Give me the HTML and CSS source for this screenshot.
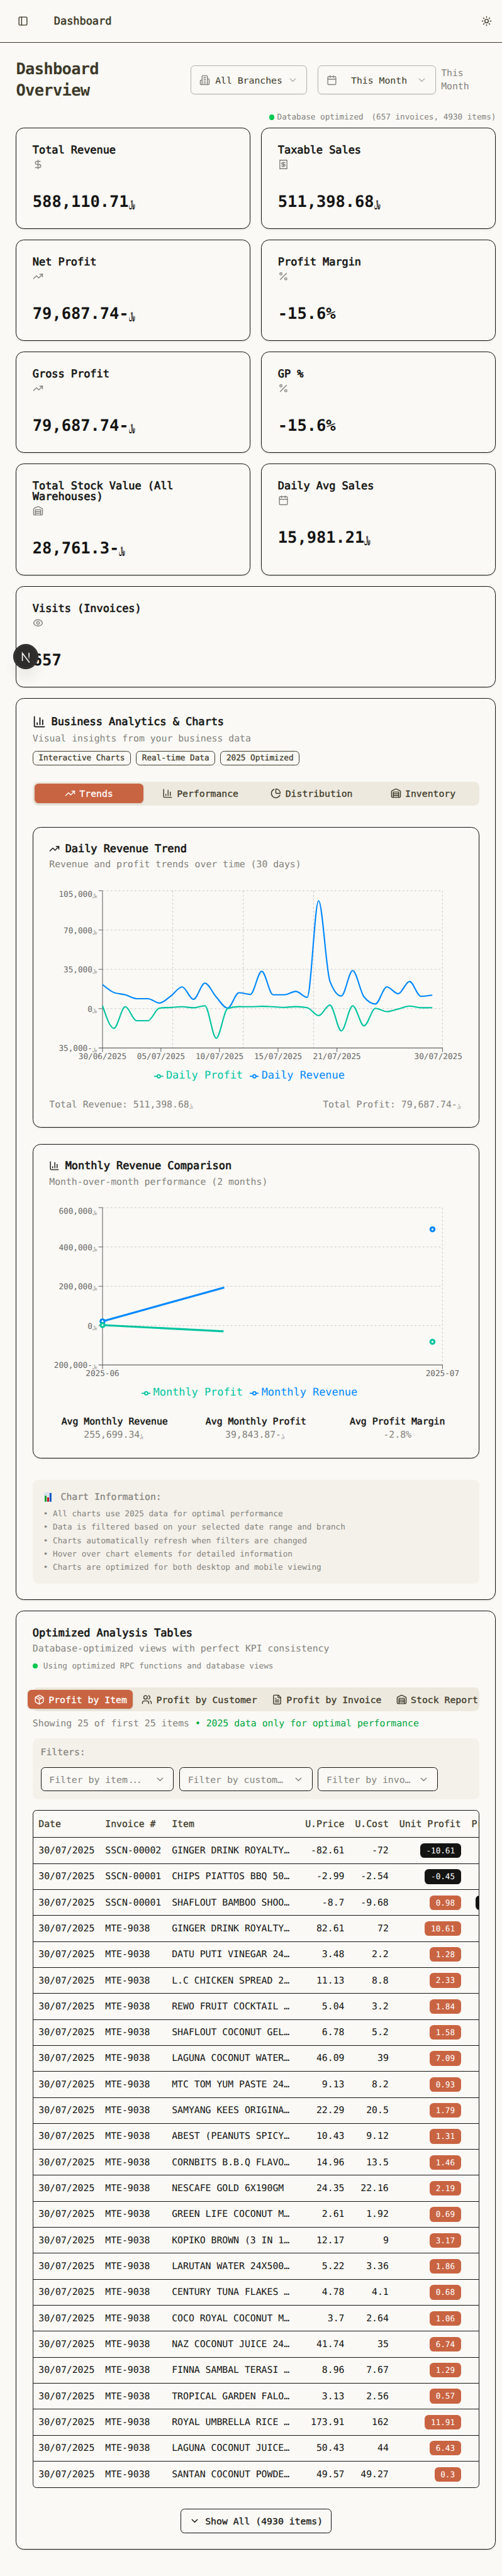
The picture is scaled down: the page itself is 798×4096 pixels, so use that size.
FILE: index.html
```html
<!DOCTYPE html>
<html lang="en">
<head>
<meta charset="utf-8">
<title>Dashboard</title>
<link rel="stylesheet" href="styles.css">
</head>
<body>
<svg class="sprite" aria-hidden="true">
  <symbol id="panel" viewBox="0 0 24 24"><rect x="3" y="3" width="18" height="18" rx="2"/><path d="M9 3v18"/></symbol>
  <symbol id="sun" viewBox="0 0 24 24"><circle cx="12" cy="12" r="4"/><path d="M12 2v2M12 20v2M4.93 4.93l1.41 1.41M17.66 17.66l1.41 1.41M2 12h2M20 12h2M6.34 17.66l-1.41 1.41M19.07 4.93l-1.41 1.41"/></symbol>
  <symbol id="building" viewBox="0 0 24 24"><path d="M6 22V4a2 2 0 0 1 2-2h8a2 2 0 0 1 2 2v18Z"/><path d="M6 12H4a2 2 0 0 0-2 2v6a2 2 0 0 0 2 2h2M18 9h2a2 2 0 0 1 2 2v9a2 2 0 0 1-2 2h-2M10 6h4M10 10h4M10 14h4M10 18h4"/></symbol>
  <symbol id="calendar" viewBox="0 0 24 24"><path d="M8 2v4M16 2v4M3 10h18"/><rect x="3" y="4" width="18" height="18" rx="2"/></symbol>
  <symbol id="chevron" viewBox="0 0 24 24"><path d="m6 9 6 6 6-6"/></symbol>
  <symbol id="dollar" viewBox="0 0 24 24"><path d="M12 2v20M17 5H9.500a3.500 3.500 0 0 0 0 7h5a3.500 3.500 0 0 1 0 7H6"/></symbol>
  <symbol id="receipt" viewBox="0 0 24 24"><path d="M4 2v20l2-1 2 1 2-1 2 1 2-1 2 1 2-1 2 1V2l-2 1-2-1-2 1-2-1-2 1-2-1-2 1Z"/><path d="M16 8h-6a2 2 0 1 0 0 4h4a2 2 0 1 1 0 4H8M12 17.500v-11"/></symbol>
  <symbol id="trend" viewBox="0 0 24 24"><path d="M16 7h6v6"/><path d="m22 7-8.500 8.500-5-5L2 17"/></symbol>
  <symbol id="percent" viewBox="0 0 24 24"><path d="M19 5 5 19"/><circle cx="6.500" cy="6.500" r="2.500"/><circle cx="17.500" cy="17.500" r="2.500"/></symbol>
  <symbol id="warehouse" viewBox="0 0 24 24"><path d="M18 21V10a1 1 0 0 0-1-1H7a1 1 0 0 0-1 1v11"/><path d="M22 19a2 2 0 0 1-2 2H4a2 2 0 0 1-2-2V8a2 2 0 0 1 1.132-1.803l7.950-3.974a2 2 0 0 1 1.837 0l7.948 3.974A2 2 0 0 1 22 8zM6 13h12M6 17h12"/></symbol>
  <symbol id="eye" viewBox="0 0 24 24"><path d="M2.062 12.348a1 1 0 0 1 0-.696 10.750 10.750 0 0 1 19.876 0 1 1 0 0 1 0 .696 10.750 10.750 0 0 1-19.876 0"/><circle cx="12" cy="12" r="3"/></symbol>
  <symbol id="bars" viewBox="0 0 24 24"><path d="M3 3v16a2 2 0 0 0 2 2h16M18 17V9M13 17V5M8 17v-3"/></symbol>
  <symbol id="pie" viewBox="0 0 24 24"><path d="M21 12c.552 0 1.005-.449.950-.998a10 10 0 0 0-8.953-8.951c-.550-.055-.998.398-.998.950v8a1 1 0 0 0 1 1z"/><path d="M21.210 15.890A10 10 0 1 1 8 2.830"/></symbol>
  <symbol id="package" viewBox="0 0 24 24"><path d="M11 21.730a2 2 0 0 0 2 0l7-4A2 2 0 0 0 21 16V8a2 2 0 0 0-1-1.730l-7-4a2 2 0 0 0-2 0l-7 4A2 2 0 0 0 3 8v8a2 2 0 0 0 1 1.730zM12 22V12M3.290 7 12 12l8.710-5M7.500 4.270l9 5.150"/></symbol>
  <symbol id="users" viewBox="0 0 24 24"><path d="M16 21v-2a4 4 0 0 0-4-4H6a4 4 0 0 0-4 4v2M22 21v-2a4 4 0 0 0-3-3.870M16 3.130a4 4 0 0 1 0 7.750"/><circle cx="9" cy="7" r="4"/></symbol>
  <symbol id="file" viewBox="0 0 24 24"><path d="M15 2H6a2 2 0 0 0-2 2v16a2 2 0 0 0 2 2h12a2 2 0 0 0 2-2V7Z"/><path d="M14 2v4a2 2 0 0 0 2 2h4M10 9H8M16 13H8M16 17H8"/></symbol>
  <symbol id="marker" viewBox="0 0 32 32"><path d="M0 16h10.666A5.333 5.333 0 1 1 21.333 16H32M21.333 16A5.333 5.333 0 1 1 10.666 16"/></symbol>
</svg>

<header class="topbar">
  <svg class="icon"><use href="#panel"/></svg>
  <h1 class="topbar-title">Dashboard</h1>
  <svg class="icon"><use href="#sun"/></svg>
</header>

<main class="page">
  <section class="overview">
    <h2 class="overview-title">Dashboard<br>Overview</h2>
    <div class="overview-controls">
      <button class="picker"><svg class="icon muted"><use href="#building"/></svg><span class="picker-label">All Branches</span><svg class="icon faint"><use href="#chevron"/></svg></button>
      <button class="picker picker-range"><svg class="icon muted"><use href="#calendar"/></svg><span class="picker-label">This Month</span><svg class="icon faint"><use href="#chevron"/></svg></button>
      <p class="range-note">This<br>Month</p>
    </div>
  </section>
  <p class="db-status"><span class="dot"></span><span>Database optimized</span><span class="db-counts">(657 invoices, 4930 items)</span></p>

  <section class="kpis">
    <article class="card kpi"><h3 class="card-title">Total Revenue</h3><svg class="icon muted"><use href="#dollar"/></svg><p class="kpi-value">588,110.71<span class="rial">﷼</span></p></article>
    <article class="card kpi"><h3 class="card-title">Taxable Sales</h3><svg class="icon muted"><use href="#receipt"/></svg><p class="kpi-value">511,398.68<span class="rial">﷼</span></p></article>
    <article class="card kpi"><h3 class="card-title">Net Profit</h3><svg class="icon muted"><use href="#trend"/></svg><p class="kpi-value">79,687.74-<span class="rial">﷼</span></p></article>
    <article class="card kpi"><h3 class="card-title">Profit Margin</h3><svg class="icon muted"><use href="#percent"/></svg><p class="kpi-value">-15.6%</p></article>
    <article class="card kpi"><h3 class="card-title">Gross Profit</h3><svg class="icon muted"><use href="#trend"/></svg><p class="kpi-value">79,687.74-<span class="rial">﷼</span></p></article>
    <article class="card kpi"><h3 class="card-title">GP %</h3><svg class="icon muted"><use href="#percent"/></svg><p class="kpi-value">-15.6%</p></article>
    <article class="card kpi"><h3 class="card-title">Total Stock Value (All<br>Warehouses)</h3><svg class="icon muted"><use href="#warehouse"/></svg><p class="kpi-value">28,761.3-<span class="rial">﷼</span></p></article>
    <article class="card kpi"><h3 class="card-title">Daily Avg Sales</h3><svg class="icon muted"><use href="#calendar"/></svg><p class="kpi-value">15,981.21<span class="rial">﷼</span></p></article>
    <article class="card kpi kpi-wide"><h3 class="card-title">Visits (Invoices)</h3><svg class="icon muted"><use href="#eye"/></svg><p class="kpi-value">657</p>
      <div class="dev-badge"><svg class="dev-logo" viewBox="0 0 16 16"><defs><linearGradient id="fade" x1="0" y1="0" x2="0" y2="1"><stop offset=".5" stop-color="#fff"/><stop offset="1" stop-color="#fff" stop-opacity="0"/></linearGradient></defs><path d="M3 13.500V3l9.500 12.500" fill="none" stroke="#fff" stroke-width="1.300"/><rect x="11.200" y="2.500" width="1.300" height="9" fill="url(#fade)"/></svg></div>
    </article>
  </section>

  <section class="card analytics">
    <h3 class="card-title with-icon"><svg class="icon icon-lg"><use href="#bars"/></svg>Business Analytics &amp; Charts</h3>
    <p class="desc">Visual insights from your business data</p>
    <div class="tags"><span class="tag">Interactive Charts</span><span class="tag">Real-time Data</span><span class="tag">2025 Optimized</span></div>

    <nav class="tabs tabs-even">
      <button class="tab active"><svg class="icon"><use href="#trend"/></svg>Trends</button>
      <button class="tab"><svg class="icon"><use href="#bars"/></svg>Performance</button>
      <button class="tab"><svg class="icon"><use href="#pie"/></svg>Distribution</button>
      <button class="tab"><svg class="icon"><use href="#warehouse"/></svg>Inventory</button>
    </nav>

    <article class="card chart-card chart-first">
      <h4 class="card-title with-icon"><svg class="icon"><use href="#trend"/></svg>Daily Revenue Trend</h4>
      <p class="desc">Revenue and profit trends over time (30 days)</p>
      <div class="chart">
        <svg class="plot" viewBox="0 0 620 268">
          <g class="grid"><path d="M80 5h510M80 64h510M80 123h510M80 182h510"/><path d="M185.300 5v236M291 5v236M396.600 5v236M590 5v236"/></g>
          <g class="axis"><path d="M80 5v242M74 5h6M74 64h6M74 123h6M74 182h6M74 241h516v6M167.600 241v6M255.400 241v6M343.300 241v6M431.700 241v6"/></g>
          <g class="ticks ticks-y"><text x="64.800" y="13.800">105,000</text><text x="64.800" y="68.500">70,000</text><text x="64.800" y="127.500">35,000</text><text x="64.800" y="186.500">0</text><text x="64.800" y="245.500">35,000-</text></g>
          <g class="ticks rials"><text x="64.800" y="13.800" textLength="7.200" lengthAdjust="spacingAndGlyphs">﷼</text><text x="64.800" y="68.500" textLength="7.200" lengthAdjust="spacingAndGlyphs">﷼</text><text x="64.800" y="127.500" textLength="7.200" lengthAdjust="spacingAndGlyphs">﷼</text><text x="64.800" y="186.500" textLength="7.200" lengthAdjust="spacingAndGlyphs">﷼</text><text x="64.800" y="245.500" textLength="7.200" lengthAdjust="spacingAndGlyphs">﷼</text></g>
          <g class="ticks ticks-x"><text x="80" y="257.200">30/06/2025</text><text x="167.800" y="257.200">05/07/2025</text><text x="255.600" y="257.200">10/07/2025</text><text x="343.400" y="257.200">15/07/2025</text><text x="431.700" y="257.200">21/07/2025</text><text x="583.700" y="257.200">30/07/2025</text></g>
          <path class="line revenue" id="daily-revenue"/>
          <path class="line profit" id="daily-profit"/>
        </svg>
        <div class="legend"><span class="legend-item profit"><svg class="marker"><use href="#marker"/></svg>Daily Profit</span><span class="legend-item revenue"><svg class="marker"><use href="#marker"/></svg>Daily Revenue</span></div>
      </div>
      <div class="totals"><span>Total Revenue: 511,398.68<span class="rial">﷼</span></span><span>Total Profit: 79,687.74-<span class="rial">﷼</span></span></div>
    </article>

    <article class="card chart-card">
      <h4 class="card-title with-icon"><svg class="icon"><use href="#bars"/></svg>Monthly Revenue Comparison</h4>
      <p class="desc">Month-over-month performance (2 months)</p>
      <div class="chart">
        <svg class="plot" viewBox="0 0 620 268">
          <g class="grid"><path d="M80 5h510M80 64h510M80 123h510M80 182h510"/><path d="M590 5v236"/></g>
          <g class="axis"><path d="M80 5v242M74 5h6M74 64h6M74 123h6M74 182h6M74 241h516v6"/></g>
          <g class="ticks ticks-y"><text x="64.800" y="13.800">600,000</text><text x="64.800" y="68.500">400,000</text><text x="64.800" y="127.500">200,000</text><text x="64.800" y="186.500">0</text><text x="64.800" y="245.500">200,000-</text></g>
          <g class="ticks rials"><text x="64.800" y="13.800" textLength="7.200" lengthAdjust="spacingAndGlyphs">﷼</text><text x="64.800" y="68.500" textLength="7.200" lengthAdjust="spacingAndGlyphs">﷼</text><text x="64.800" y="127.500" textLength="7.200" lengthAdjust="spacingAndGlyphs">﷼</text><text x="64.800" y="186.500" textLength="7.200" lengthAdjust="spacingAndGlyphs">﷼</text><text x="64.800" y="245.500" textLength="7.200" lengthAdjust="spacingAndGlyphs">﷼</text></g>
          <g class="ticks ticks-x"><text x="80" y="257.500">2025-06</text><text x="590" y="257.500">2025-07</text></g>
          <g class="line thick revenue"><path d="M80 175.500 262.600 124.800"/><circle cx="80" cy="175.500" r="3"/><circle cx="575" cy="37.500" r="3"/></g>
          <g class="line thick profit"><path d="M80 181.200 261.600 190.500"/><circle cx="80" cy="181.200" r="3"/><circle cx="575" cy="206.300" r="3"/></g>
        </svg>
        <div class="legend"><span class="legend-item profit"><svg class="marker"><use href="#marker"/></svg>Monthly Profit</span><span class="legend-item revenue"><svg class="marker"><use href="#marker"/></svg>Monthly Revenue</span></div>
      </div>
      <dl class="averages">
        <div><dt>Avg Monthly Revenue</dt><dd>255,699.34<span class="rial">﷼</span></dd></div>
        <div><dt>Avg Monthly Profit</dt><dd>39,843.87-<span class="rial">﷼</span></dd></div>
        <div><dt>Avg Profit Margin</dt><dd>-2.8%</dd></div>
      </dl>
    </article>

    <aside class="info">
      <p class="info-title"><svg class="info-icon" viewBox="0 0 12 14"><rect width="12" height="14" fill="#d9e3ee"/><rect x="1" y="5" width="2.800" height="9" fill="#14a32a"/><rect x="4.700" y="7.500" width="2.800" height="6.500" fill="#c4161c"/><rect x="8.400" y="1" width="2.800" height="13" fill="#0b57c4"/></svg>Chart Information:</p>
      <ul class="info-list">
        <li>• All charts use 2025 data for optimal performance</li>
        <li>• Data is filtered based on your selected date range and branch</li>
        <li>• Charts automatically refresh when filters are changed</li>
        <li>• Hover over chart elements for detailed information</li>
        <li>• Charts are optimized for both desktop and mobile viewing</li>
      </ul>
    </aside>
  </section>

  <section class="card tables">
    <h3 class="card-title">Optimized Analysis Tables</h3>
    <p class="desc">Database-optimized views with perfect KPI consistency</p>
    <p class="rpc-status"><span class="dot"></span>Using optimized RPC functions and database views</p>

    <nav class="tabs tabs-auto">
      <button class="tab active"><svg class="icon"><use href="#package"/></svg>Profit by Item</button>
      <button class="tab"><svg class="icon"><use href="#users"/></svg>Profit by Customer</button>
      <button class="tab"><svg class="icon"><use href="#file"/></svg>Profit by Invoice</button>
      <button class="tab"><svg class="icon"><use href="#warehouse"/></svg>Stock Report</button>
    </nav>

    <p class="showing">Showing 25 of first 25 items <span class="showing-note">• 2025 data only for optimal performance</span></p>

    <div class="filters">
      <p class="filters-label">Filters:</p>
      <div class="filters-row">
        <button class="select"><span>Filter by item<span class="dots">...</span></span><svg class="icon"><use href="#chevron"/></svg></button>
        <button class="select"><span>Filter by custom…</span><svg class="icon"><use href="#chevron"/></svg></button>
        <button class="select select-narrow"><span>Filter by invo…</span><svg class="icon"><use href="#chevron"/></svg></button>
      </div>
    </div>

    <div class="table-wrap">
      <table class="table">
        <colgroup><col class="c-date"><col class="c-invoice"><col class="c-item"><col class="c-price"><col class="c-cost"><col class="c-unit"><col class="c-more"></colgroup>
        <thead><tr><th>Date</th><th>Invoice #</th><th>Item</th><th class="num">U.Price</th><th class="num">U.Cost</th><th class="num">Unit Profit</th><th>Profit</th></tr></thead>
        <tbody>
          <tr><td>30/07/2025</td><td>SSCN-00002</td><td>GINGER DRINK ROYALTY…</td><td class="num">-82.61</td><td class="num">-72</td><td class="num"><span class="pill loss">-10.61</span></td><td></td></tr>
          <tr><td>30/07/2025</td><td>SSCN-00001</td><td>CHIPS PIATTOS BBQ 50…</td><td class="num">-2.99</td><td class="num">-2.54</td><td class="num"><span class="pill loss">-0.45</span></td><td></td></tr>
          <tr><td>30/07/2025</td><td>SSCN-00001</td><td>SHAFLOUT BAMBOO SHOO…</td><td class="num">-8.7</td><td class="num">-9.68</td><td class="num"><span class="pill">0.98</span></td><td class="more"><span class="pill loss pill-cut"></span></td></tr>
          <tr><td>30/07/2025</td><td>MTE-9038</td><td>GINGER DRINK ROYALTY…</td><td class="num">82.61</td><td class="num">72</td><td class="num"><span class="pill">10.61</span></td><td></td></tr>
          <tr><td>30/07/2025</td><td>MTE-9038</td><td>DATU PUTI VINEGAR 24…</td><td class="num">3.48</td><td class="num">2.2</td><td class="num"><span class="pill">1.28</span></td><td></td></tr>
          <tr><td>30/07/2025</td><td>MTE-9038</td><td>L.C CHICKEN SPREAD 2…</td><td class="num">11.13</td><td class="num">8.8</td><td class="num"><span class="pill">2.33</span></td><td></td></tr>
          <tr><td>30/07/2025</td><td>MTE-9038</td><td>REWO FRUIT COCKTAIL …</td><td class="num">5.04</td><td class="num">3.2</td><td class="num"><span class="pill">1.84</span></td><td></td></tr>
          <tr><td>30/07/2025</td><td>MTE-9038</td><td>SHAFLOUT COCONUT GEL…</td><td class="num">6.78</td><td class="num">5.2</td><td class="num"><span class="pill">1.58</span></td><td></td></tr>
          <tr><td>30/07/2025</td><td>MTE-9038</td><td>LAGUNA COCONUT WATER…</td><td class="num">46.09</td><td class="num">39</td><td class="num"><span class="pill">7.09</span></td><td></td></tr>
          <tr><td>30/07/2025</td><td>MTE-9038</td><td>MTC TOM YUM PASTE 24…</td><td class="num">9.13</td><td class="num">8.2</td><td class="num"><span class="pill">0.93</span></td><td></td></tr>
          <tr><td>30/07/2025</td><td>MTE-9038</td><td>SAMYANG KEES ORIGINA…</td><td class="num">22.29</td><td class="num">20.5</td><td class="num"><span class="pill">1.79</span></td><td></td></tr>
          <tr><td>30/07/2025</td><td>MTE-9038</td><td>ABEST (PEANUTS SPICY…</td><td class="num">10.43</td><td class="num">9.12</td><td class="num"><span class="pill">1.31</span></td><td></td></tr>
          <tr><td>30/07/2025</td><td>MTE-9038</td><td>CORNBITS B.B.Q FLAVO…</td><td class="num">14.96</td><td class="num">13.5</td><td class="num"><span class="pill">1.46</span></td><td></td></tr>
          <tr><td>30/07/2025</td><td>MTE-9038</td><td>NESCAFE GOLD 6X190GM</td><td class="num">24.35</td><td class="num">22.16</td><td class="num"><span class="pill">2.19</span></td><td></td></tr>
          <tr><td>30/07/2025</td><td>MTE-9038</td><td>GREEN LIFE COCONUT M…</td><td class="num">2.61</td><td class="num">1.92</td><td class="num"><span class="pill">0.69</span></td><td></td></tr>
          <tr><td>30/07/2025</td><td>MTE-9038</td><td>KOPIKO BROWN (3 IN 1…</td><td class="num">12.17</td><td class="num">9</td><td class="num"><span class="pill">3.17</span></td><td></td></tr>
          <tr><td>30/07/2025</td><td>MTE-9038</td><td>LARUTAN WATER 24X500…</td><td class="num">5.22</td><td class="num">3.36</td><td class="num"><span class="pill">1.86</span></td><td></td></tr>
          <tr><td>30/07/2025</td><td>MTE-9038</td><td>CENTURY TUNA FLAKES …</td><td class="num">4.78</td><td class="num">4.1</td><td class="num"><span class="pill">0.68</span></td><td></td></tr>
          <tr><td>30/07/2025</td><td>MTE-9038</td><td>COCO ROYAL COCONUT M…</td><td class="num">3.7</td><td class="num">2.64</td><td class="num"><span class="pill">1.06</span></td><td></td></tr>
          <tr><td>30/07/2025</td><td>MTE-9038</td><td>NAZ COCONUT JUICE 24…</td><td class="num">41.74</td><td class="num">35</td><td class="num"><span class="pill">6.74</span></td><td></td></tr>
          <tr><td>30/07/2025</td><td>MTE-9038</td><td>FINNA SAMBAL TERASI …</td><td class="num">8.96</td><td class="num">7.67</td><td class="num"><span class="pill">1.29</span></td><td></td></tr>
          <tr><td>30/07/2025</td><td>MTE-9038</td><td>TROPICAL GARDEN FALO…</td><td class="num">3.13</td><td class="num">2.56</td><td class="num"><span class="pill">0.57</span></td><td></td></tr>
          <tr><td>30/07/2025</td><td>MTE-9038</td><td>ROYAL UMBRELLA RICE …</td><td class="num">173.91</td><td class="num">162</td><td class="num"><span class="pill">11.91</span></td><td></td></tr>
          <tr><td>30/07/2025</td><td>MTE-9038</td><td>LAGUNA COCONUT JUICE…</td><td class="num">50.43</td><td class="num">44</td><td class="num"><span class="pill">6.43</span></td><td></td></tr>
          <tr><td>30/07/2025</td><td>MTE-9038</td><td>SANTAN COCONUT POWDE…</td><td class="num">49.57</td><td class="num">49.27</td><td class="num"><span class="pill">0.3</span></td><td></td></tr>
        </tbody>
      </table>
    </div>

    <button class="show-all"><svg class="icon"><use href="#chevron"/></svg>Show All (4930 items)</button>
  </section>
</main>
<script src="charts.js"></script>
</body>
</html>
```

FILE: styles.css
```css
/* 1rem = 10 design units */
html { font-size: 10.596px; }

*, *::before, *::after { box-sizing: border-box; }

body {
  margin: 0;
  height: 4096px;
  overflow: hidden;
  background: #faf9f5;
  color: #141413;
  font-family: "DejaVu Sans Mono", "Liberation Mono", monospace;
  font-size: 1.4rem;
  line-height: 2rem;
  letter-spacing: -0.002em;
  text-rendering: geometricPrecision;
}

h1, h2, h3, h4, p, ul, dl, dd { margin: 0; padding: 0; }
ul { list-style: none; }

button {
  font: inherit;
  letter-spacing: inherit;
  color: inherit;
  background: none;
  border: 0;
  padding: 0;
  margin: 0;
}

.sprite { position: absolute; width: 0; height: 0; }

.icon {
  display: block;
  flex: none;
  width: 1.6rem;
  height: 1.6rem;
  fill: none;
  stroke: currentColor;
  stroke-width: 2;
  stroke-linecap: round;
  stroke-linejoin: round;
}
.icon-lg { width: 2rem; height: 2rem; }
.muted { color: #83827d; }
.faint { color: #83827d; opacity: 0.6; }

.dot { flex: none; width: 0.8rem; height: 0.8rem; border-radius: 50%; background: #00c951; }

/* Rial sign condensed to a single monospace cell */
.rial {
  display: inline-block;
  width: 0.968em;
  font-size: 0.62em;
  line-height: 1;
  white-space: nowrap;
  transform: scaleX(0.56);
  transform-origin: 0 50%;
}

/* Top bar */
.topbar {
  display: flex;
  align-items: center;
  height: 6.4rem;
  padding: 0 1.5rem 0 2.6rem;
  border-bottom: 1px solid #3d3929;
  color: #3d3929;
}
.topbar-title {
  flex: 1;
  margin-left: 3.9rem;
  font-size: 1.6rem;
  font-weight: 400;
  -webkit-text-stroke: 0.035em;
}

.page { padding: 2.4rem 0.9rem 0 2.4rem; }

/* Overview row */
.overview { display: flex; align-items: center; justify-content: space-between; height: 6.4rem; color: #3d3929; }
.overview-title { font-size: 2.4rem; line-height: 3.2rem; font-weight: 700; letter-spacing: -0.027em; }
.overview-controls { display: flex; align-items: center; }
.picker {
  display: flex;
  align-items: center;
  gap: 0.8rem;
  height: 4.4rem;
  width: 17.48rem;
  padding: 0 1.2rem;
  border: 1px solid #b1b0aa;
  border-radius: 0.6rem;
  box-shadow: 0 1px 2px rgba(0, 0, 0, 0.05);
}
.picker-range { width: 17.7rem; margin-left: 1.6rem; }
.picker-range .picker-label { flex: 1; margin-left: 1.3rem; text-align: left; }
.range-note { width: 8.24rem; margin-left: 0.8rem; color: #83827d; }

.db-status {
  display: flex;
  align-items: center;
  justify-content: flex-end;
  gap: 0.4rem;
  height: 1.6rem;
  margin: 1.6rem 0 0.8rem;
  font-size: 1.2rem;
  line-height: 1.6rem;
  color: #83827d;
}
.db-counts { margin-left: 0.8rem; }

/* Cards */
.card {
  border: 1px solid #141413;
  border-radius: 1.2rem;
  padding: 2.4rem;
  background: #faf9f5;
  box-shadow: 0 1px 3px rgba(0, 0, 0, 0.1), 0 1px 2px -1px rgba(0, 0, 0, 0.1);
}
.card-title { font-size: 1.6rem; line-height: 1.6rem; font-weight: 400; -webkit-text-stroke: 0.04em; }
.with-icon { display: flex; align-items: center; gap: 0.8rem; }
.desc { margin-top: 0.6rem; color: #83827d; }

.kpis { display: grid; grid-template-columns: 1fr 1fr; gap: 1.6rem; }
.kpi { min-height: 15.2rem; position: relative; }
.kpi .icon { margin-top: 0.6rem; }
.kpi-wide { grid-column: 1 / -1; }
.kpi-value {
  margin-top: 3.2rem;
  font-size: 2.4rem;
  line-height: 3.2rem;
  font-weight: 700;
  direction: ltr;
  unicode-bidi: bidi-override;
}

/* Framework dev indicator floating above the page */
.dev-badge {
  position: absolute;
  left: -0.5rem;
  top: 8.6rem;
  display: grid;
  place-items: center;
  width: 3.76rem;
  height: 3.76rem;
  border: 1px solid #141413;
  border-radius: 50%;
  background: #2e2d2c;
  box-shadow: inset 0 0 0 1px #4c4b49, 0 1.6rem 2.4rem -0.8rem rgba(0, 0, 0, 0.16);
}
.dev-logo { width: 1.8rem; height: 1.8rem; }

/* Analytics */
.analytics { margin-top: 1.6rem; }
.tags { display: flex; gap: 0.8rem; margin-top: 0.8rem; }
.tag {
  height: 2.2rem;
  padding: 0.2rem 0.8rem;
  border: 1px solid #3d3929;
  border-radius: 0.6rem;
  font-size: 1.2rem;
  line-height: 1.6rem;
  color: #3d3929;
  -webkit-text-stroke: 0.02em;
}

.tabs { gap: 0.4rem; height: 3.6rem; margin-top: 2.4rem; padding: 0.3rem; border-radius: 0.8rem; background: #ede9de; color: #3d3929; }
.tabs-even { display: grid; grid-template-columns: repeat(4, 1fr); align-items: center; }
.tabs-auto { display: flex; justify-content: center; align-items: center; }
.tab {
  display: flex;
  flex: none;
  align-items: center;
  justify-content: center;
  gap: 0.6rem;
  height: 2.9rem;
  padding: 0 0.9rem;
  border-radius: 0.6rem;
  white-space: nowrap;
  -webkit-text-stroke: 0.02em;
}
.tab.active { background: #c96442; color: #fff; box-shadow: 0 1px 3px rgba(0, 0, 0, 0.15); }

.chart-card { margin-top: 2.4rem; }
.chart-first { margin-top: 3.2rem; }
.chart { height: 30rem; margin-top: 2.4rem; }
.plot { display: block; width: 100%; height: 26.8rem; overflow: visible; }
.grid { fill: none; stroke: #ccc; stroke-dasharray: 3 3; }
.axis { fill: none; stroke: #666; }
.ticks { font-size: 12px; fill: #666; }
.ticks-y { text-anchor: end; }
.ticks-x { text-anchor: middle; }
.rials { font-size: 7.5px; text-anchor: start; }
.ticks text { direction: ltr; unicode-bidi: bidi-override; }
.line { fill: none; stroke-width: 2; }
.thick { stroke-width: 3; }
.thick circle { fill: #fff; }
.line.revenue { stroke: #0088fe; }
.line.profit { stroke: #00c49f; }

.legend { display: flex; justify-content: center; gap: 1rem; margin: 0.2rem 4rem 0 2rem; font-size: 1.6rem; line-height: 2.4rem; }
.legend-item { display: flex; align-items: center; gap: 0.4rem; }
.legend-item.revenue { color: #0088fe; }
.legend-item.profit { color: #00c49f; }
.marker { width: 1.4rem; height: 1.4rem; margin-top: 0.3rem; fill: none; stroke: currentColor; stroke-width: 4; }

.totals { display: flex; justify-content: space-between; margin-top: 1.6rem; color: #83827d; }
.totals > span, .averages dd { direction: ltr; unicode-bidi: bidi-override; }

.averages { display: grid; grid-template-columns: repeat(3, 1fr); gap: 1.6rem; margin-top: 1.6rem; text-align: center; }
.averages dt { -webkit-text-stroke: 0.035em; white-space: nowrap; }
.averages dd { color: #83827d; }

.info { margin-top: 3.2rem; padding: 1.6rem; border-radius: 0.8rem; background: #f4f1ea; color: #83827d; }
.info-title { display: flex; align-items: center; gap: 1.34rem; -webkit-text-stroke: 0.015em; }
.info-icon { width: 1.2rem; height: 1.4rem; margin-left: 0.08rem; }
.info-list { display: grid; gap: 0.4rem; margin-top: 0.8rem; font-size: 1.2rem; line-height: 1.6rem; }

/* Tables */
.tables { margin-top: 1.6rem; }
.rpc-status { display: flex; align-items: center; gap: 0.8rem; margin-top: 0.8rem; font-size: 1.2rem; line-height: 1.6rem; color: #83827d; }
.showing { margin-top: 0.8rem; color: #83827d; }
.showing-note { color: #00a63e; }

.filters { height: 9.2rem; margin-top: 1.2rem; padding: 1.2rem; border-radius: 0.8rem; background: #f4f1ea; color: #83827d; }
.filters-label { -webkit-text-stroke: 0.015em; }
.filters-row { display: flex; gap: 0.8rem; margin-top: 1.2rem; }
.select {
  display: flex;
  align-items: center;
  justify-content: space-between;
  width: 20rem;
  height: 3.6rem;
  padding: 0 1.2rem;
  border: 1px solid #141413;
  border-radius: 0.6rem;
  background: #faf9f5;
  white-space: nowrap;
}
.select-narrow { width: 18rem; }
.dots { margin-left: 0.1rem; letter-spacing: -0.24rem; }

.table-wrap { margin-top: 1.6rem; height: 101.7rem; border: 1px solid #141413; border-radius: 0.6rem; overflow: hidden; }
.table { width: 74rem; table-layout: fixed; border-collapse: separate; border-spacing: 0; }
.c-date, .c-invoice { width: 10rem; }
.c-item { width: 20rem; }
.c-price { width: 7.48rem; }
.c-cost { width: 6.64rem; }
.c-unit { width: 10.84rem; }
.c-more { width: 9.04rem; }
.table th, .table td { padding: 0 0.8rem; border-bottom: 1px solid #141413; text-align: left; white-space: nowrap; vertical-align: middle; }
.table th { height: 4.1rem; font-weight: 400; color: #3d3929; -webkit-text-stroke: 0.02em; }
.table td { height: 3.9rem; }
.table .num { text-align: right; }
.table tbody tr:last-child td { border-bottom: 0; }
.table td.more { padding-left: 1.45rem; }

.pill {
  display: inline-block;
  height: 2.2rem;
  padding: 0 0.9rem;
  border-radius: 0.6rem;
  background: #c96442;
  color: #fff;
  font-size: 1.2rem;
  line-height: 2.2rem;
  vertical-align: middle;
}
.pill.loss { background: #141413; }
.pill-cut { width: 6rem; }

.show-all {
  display: flex;
  align-items: center;
  gap: 0.8rem;
  height: 3.6rem;
  margin: 3.2rem auto 0;
  padding: 0 1.2rem;
  border: 1px solid #141413;
  border-radius: 0.6rem;
  box-shadow: 0 1px 2px rgba(0, 0, 0, 0.05);
  -webkit-text-stroke: 0.02em;
}
```

FILE: charts.js
```js
// Daily series, in thousands.
const revenue = [21.5, 14.4, 12.4, 8.9, 8.9, 5, 11.2, 19.4, 8.3, 22.7, 10.4, 0.45, 14.2, 12.7, 33.3, 12.4, 12.4, 15.4, 10.1, 96.1, 24.4, 11.3, 33.9, 10.4, 4.2, 19.4, 13.3, 24.2, 11, 12.1];
const profit = [2.6, -17.5, 1.7, -10.7, -10.7, 0.5, 1.1, 1.7, 0.8, 2.6, -26.3, 0, 1.8, 1.7, 2.1, 1.7, 1.2, 1.8, 0.9, -6.2, 3.2, -19.8, 2.6, -15.3, 0.3, -2.6, -0.3, 2.3, 0.8, 0.9];

const STEP = 17.06;
const toX = i => 80 + i * STEP;
const toY = v => 182 - (v / 35) * 59;

// Monotone cubic interpolation through evenly spaced points.
function monotonePath(values) {
  const y = values.map(toY);
  const n = y.length;
  const slope = i => (y[i + 1] - y[i]) / STEP;
  const m = y.map((_, i) => {
    if (i === 0 || i === n - 1) return 0;
    const a = slope(i - 1), b = slope(i);
    if (a * b <= 0) return 0;
    return Math.sign(a) * 2 * Math.min(Math.abs(a), Math.abs(b), Math.abs(a + b) / 4);
  });
  m[0] = (3 * slope(0) - m[1]) / 2;
  m[n - 1] = (3 * slope(n - 2) - m[n - 2]) / 2;
  let d = `M${toX(0)} ${y[0]}`;
  const h = STEP / 3;
  for (let i = 0; i < n - 1; i++) {
    d += `C${toX(i) + h} ${y[i] + m[i] * h} ${toX(i + 1) - h} ${y[i + 1] - m[i + 1] * h} ${toX(i + 1)} ${y[i + 1]}`;
  }
  return d;
}

document.getElementById('daily-revenue').setAttribute('d', monotonePath(revenue));
document.getElementById('daily-profit').setAttribute('d', monotonePath(profit));
```
